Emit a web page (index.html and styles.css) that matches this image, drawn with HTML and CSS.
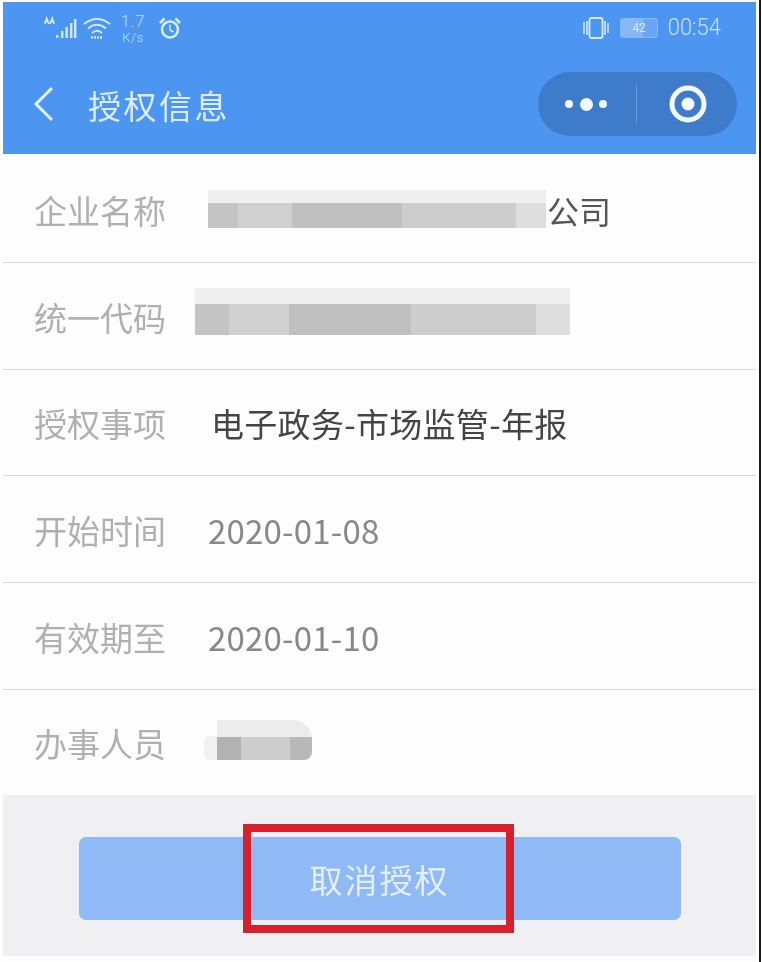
FILE: index.html
```
<!DOCTYPE html>
<html lang="zh-CN">
<head>
<meta charset="utf-8">
<title>授权信息</title>
<link rel="stylesheet" href="styles.css">
</head>
<body>
<div class="phone">
  <header class="head">
    <div class="status">
      <div class="status-left">
        <svg class="sig" viewBox="0 0 36 24" width="36" height="24"><g fill="none" stroke="#d2e8fb" stroke-width="1.5"><path d="M0.5 8l2.2-6 2.2 6M1 6h3.5M6 8l2.2-6 2.2 6M6.5 6h3.5"/></g><g fill="#cfe8f8"><rect x="12" y="19" width="2.4" height="3"/><rect x="17" y="15" width="2.4" height="7"/><rect x="21.5" y="11" width="2.4" height="11"/><rect x="26" y="7" width="2.4" height="15"/><rect x="30" y="3" width="2.4" height="19"/></g></svg>
        <svg class="wifi" viewBox="0 0 28 24" width="28" height="24"><g fill="none" stroke="#cfe8f8" stroke-width="2"><path d="M1 8Q14-2 27 8"/><path d="M5 12.500Q14 5 23 12.500"/><path d="M9 17Q14 12.500 19 17"/></g><path d="M8 21.500h12" stroke="#cfe8f8" stroke-width="2.4" stroke-dasharray="2 1"/></svg>
        <div class="speed"><span>1.7</span><span class="unit">K/s</span></div>
        <svg class="alarm" viewBox="0 0 24 24" width="24" height="24"><g fill="none" stroke="#d6ecf8" stroke-width="2.6"><circle cx="12" cy="13.500" r="8"/><path d="M12 8.500v5.500l3.500 2" stroke-width="1.500"/><path d="M2 7l4.500-4.500M22 7l-4.500-4.500"/></g></svg>
      </div>
      <div class="status-right">
        <svg class="vib" viewBox="0 0 28 24" width="28" height="24"><g fill="none" stroke="#d8ebfd" stroke-width="1.8"><rect x="7.500" y="2" width="13" height="20" rx="2"/><path d="M2 6v12M5 5v14M23 5v14M26 7v10" stroke-width="1.500"/></g></svg>
        <div class="batt"><span class="batt-num">42</span></div>
        <span class="clock">00:54</span>
      </div>
    </div>
    <div class="nav">
      <svg class="back" viewBox="0 0 24 38" width="24" height="38"><path d="M20 3L4 19l16 16" fill="none" stroke="#e6f2fe" stroke-width="3"/></svg>
      <h1 class="title">授权信息</h1>
      <div class="capsule">
        <div class="cap-cell cap-more">
          <i class="dot"></i><i class="dot big"></i><i class="dot"></i>
        </div>
        <div class="cap-line"></div>
        <div class="cap-cell cap-home">
          <svg viewBox="0 0 38 38" width="38" height="38"><circle cx="19" cy="19" r="16" fill="none" stroke="#f2f8fe" stroke-width="5"/><circle cx="19" cy="19" r="6.500" fill="#f2f8fe"/></svg>
        </div>
      </div>
    </div>
  </header>

  <main class="list">
    <div class="row">
      <span class="label">企业名称</span>
      <div class="val val-company">
        <div class="mosaic m-company">
          <div class="m-top"></div>
          <div class="m-bottom"><i class="s1"></i><i class="s2"></i><i class="s3"></i><i class="s4"></i><i class="s5"></i></div>
        </div>
        <span class="dark">公司</span>
      </div>
    </div>
    <div class="row">
      <span class="label">统一代码</span>
      <div class="val val-code">
        <div class="mosaic m-code">
          <div class="m-top"></div>
          <div class="m-bottom"><i class="s1"></i><i class="s2"></i><i class="s3"></i><i class="s4"></i><i class="s5"></i></div>
        </div>
      </div>
    </div>
    <div class="row">
      <span class="label">授权事项</span>
      <div class="val val-item"><span class="black">电子政务-市场监管-年报</span></div>
    </div>
    <div class="row">
      <span class="label">开始时间</span>
      <div class="val"><span class="date">2020-01-08</span></div>
    </div>
    <div class="row">
      <span class="label">有效期至</span>
      <div class="val"><span class="date">2020-01-10</span></div>
    </div>
    <div class="row row-last">
      <span class="label">办事人员</span>
      <div class="val val-person">
        <div class="person">
          <div class="p-tab"></div>
          <div class="p-main">
            <div class="p-top"></div>
            <div class="p-bottom"><i class="p1"></i><i class="p2"></i><i class="p3"></i></div>
          </div>
        </div>
      </div>
    </div>
  </main>

  <footer class="foot">
    <button class="btn" type="button"><span class="btn-text">取消授权</span></button>
    <div class="mark"></div>
  </footer>
</div>
<div class="edge"></div>
</body>
</html>
```

FILE: styles.css
```
* { box-sizing: border-box; }
html, body { margin: 0; padding: 0; background: #fff; }
body { width: 762px; height: 962px; overflow: hidden; font-family: "Noto Sans CJK SC", "Noto Sans", sans-serif; display: flex; align-items: stretch; }
.phone { flex: none; width: 753px; margin: 2px 0 0 3px; display: flex; flex-direction: column; background: #fdfdfe; }
.edge { flex: none; width: 2px; margin-left: 3px; background: #1c1c1e; }

.head { height: 152px; flex: none; background: #4c96f2; display: flex; flex-direction: column; }
.status { height: 52px; flex: none; display: flex; justify-content: space-between; align-items: center; padding: 0 35px 0 41px; filter: blur(0.5px); }
.status-left, .status-right { display: flex; align-items: center; }
.sig { margin-right: 3px; }
.wifi { margin-right: 10px; }
.speed { display: flex; flex-direction: column; align-items: center; width: 24px; margin-right: 13px; color: #bcdcfa; font-size: 17px; line-height: 20px; font-family: "Roboto", sans-serif; font-weight: 300; letter-spacing: 0.5px; }
.unit { font-size: 13px; line-height: 14px; }
.vib { margin-right: 10px; }
.batt { width: 38px; height: 20px; background: linear-gradient(to right, #86b8f6 0 60%, #6aa6f4 60% 100%); border: 1px solid #86b8f6; border-radius: 3px; display: flex; align-items: center; justify-content: center; margin-right: 7px; }
.batt-num { font-size: 12px; color: #d6e8fc; line-height: 1; font-family: "Roboto", sans-serif; }
.clock { font-family: "Roboto", sans-serif; font-size: 23px; font-weight: 300; color: #c8e2fb; line-height: 24px; transform: scaleX(0.95); transform-origin: right center; }

.nav { height: 100px; flex: none; display: flex; align-items: center; padding: 0 19px 0 29px; }
.back { flex: none; margin-right: 32px; filter: blur(0.4px); }
.title { margin: 2px 0 0; flex: 1; font-size: 33px; font-weight: 400; color: #dcecfd; line-height: 44px; letter-spacing: 2.500px; filter: blur(0.5px); }
.capsule { flex: none; width: 199px; height: 64px; border-radius: 32px; background: #3e7ccb; display: flex; align-items: center; }
.cap-cell { display: flex; align-items: center; justify-content: center; }
.cap-more { flex: none; width: 98px; gap: 6.500px; padding-right: 2px; }
.cap-home { flex: 1; padding-left: 2px; }
.cap-line { flex: none; width: 1px; height: 40px; background: #6b9bdb; }
.dot { width: 8px; height: 8px; border-radius: 50%; background: #f2f8fe; }
.dot.big { width: 13px; height: 13px; }

.list { display: flex; flex-direction: column; padding-top: 2px; flex: none; }
.row { height: 106.800px; flex: none; display: flex; align-items: center; border-bottom: 1px solid #dcdcdc; padding: 2px 0 0 31px; }
.row-last { border-bottom: 0; height: 105px; }
.label { flex: none; width: 161px; font-size: 33px; color: #b0b0b0; line-height: 44px; filter: blur(0.4px); }
.val { display: flex; align-items: center; font-size: 32px; line-height: 44px; margin-left: 13px; }
.dark { color: #565656; font-size: 32px; margin-left: 1px; filter: blur(0.4px); }
.black { color: #444; font-size: 33px; letter-spacing: 0.300px; filter: blur(0.4px); }
.val-item { margin-left: 16px; }
.date { color: #888; font-size: 33px; letter-spacing: 0.200px; filter: blur(0.4px); }
.val-code { margin-left: 0; }

.mosaic { display: flex; flex-direction: column; filter: blur(0.4px); }
.m-company { width: 338px; height: 38px; margin-top: -2px; }
.m-company .m-top { height: 13px; background: #efefef; }
.m-company .m-bottom { height: 25px; }
.m-code { width: 375px; height: 47px; margin-top: -10px; }
.m-code .m-top { height: 16px; background: #efefef; }
.m-code .m-bottom { height: 31px; }
.m-bottom { display: flex; }
.m-bottom i { display: block; }
.s1 { width: 9%; background: #c4c4c4; }
.s2 { width: 16%; background: #d0d0d0; }
.s3 { width: 32.500%; background: #c0c0c0; }
.s4 { width: 33.500%; background: #cdcdcd; }
.s5 { width: 9%; background: #dedede; }

.val-person { margin-left: 9px; }
.person { display: flex; height: 40px; margin-top: -7px; filter: blur(0.6px); }
.p-tab { width: 13px; height: 24px; align-self: flex-end; background: #f2f2f2; border-radius: 6px 0 0 6px; }
.p-main { width: 95px; height: 40px; display: flex; flex-direction: column; overflow: hidden; border-radius: 0 20px 8px 0; background: #ececec; }
.p-top { height: 17px; flex: none; background: #ececec; }
.p-bottom { height: 23px; flex: none; display: flex; }
.p-bottom i { display: block; }
.p1 { width: 24px; background: #b2b2b2; }
.p2 { width: 49px; background: #cdcdcd; }
.p3 { width: 22px; background: #b8b8b8; }

.foot { position: relative; height: 161px; flex: none; background: #f0f0f3; display: flex; justify-content: center; align-items: flex-start; padding: 42px 0 0 0; }
.btn { width: 602px; height: 83px; border: 0; border-radius: 7px; background: #8fbaf6; color: #e4effd; font-family: inherit; font-size: 33px; letter-spacing: 2px; padding: 2px 0 0; }
.btn-text { display: inline-block; filter: blur(0.5px); }
.mark { position: absolute; left: 240px; top: 29px; width: 271px; height: 109px; border: 8px solid #d81f2c; }
```
